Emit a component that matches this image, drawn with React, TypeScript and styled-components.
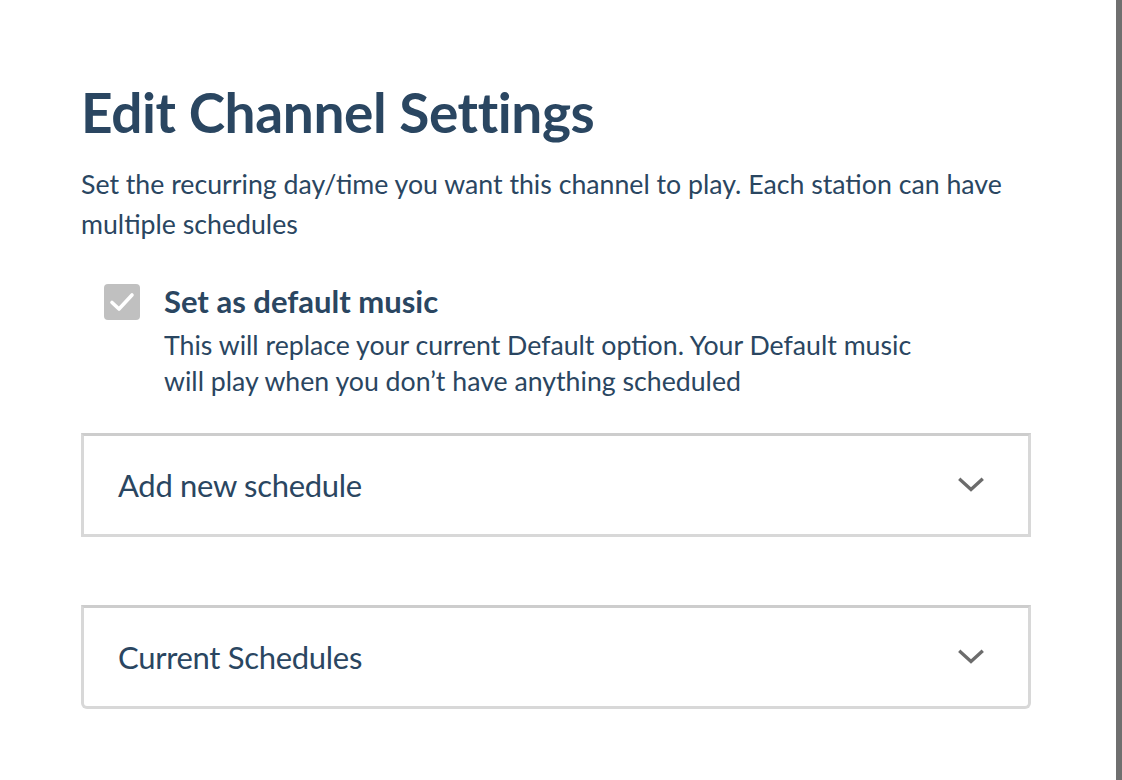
import styled, { createGlobalStyle } from "styled-components"

const GlobalStyle = createGlobalStyle`
  html, body {
    margin: 0;
    padding: 0;
    background: #ffffff;
  }
  body {
    font-family: Lato, "Open Sans", "Liberation Sans", sans-serif;
    color: #2a4661;
  }
`

// Layout
const Page = styled.div`
  display: flex;
  height: 780px;
  overflow: hidden;
`
const Modal = styled.section`
  flex: 1;
  background: #ffffff;
  padding: 76px 0 0 81px;
  box-sizing: border-box;
`
const Backdrop = styled.div`
  width: 6px;
  background: #6f6f6f;
`
const Content = styled.div`
  width: 950px;
  display: flex;
  flex-direction: column;
`

// Header
const Title = styled.h1`
  margin: 0;
  font-size: 55px;
  line-height: 72px;
  font-weight: 700;
  letter-spacing: -0.4px;
  color: #2a4661;
`
const Lead = styled.p`
  margin: 16px 0 0;
  font-size: 26.7px;
  line-height: 40px;
  font-weight: 400;
  width: 940px;
`

// Default option
const Option = styled.label`
  display: flex;
  gap: 24px;
  margin: 37px 0 0 23px;
  cursor: pointer;
`
const Box = styled.span<{ $checked: boolean }>`
  flex: none;
  width: 36px;
  height: 36px;
  margin-top: 3px;
  border-radius: 4px;
  background: ${props => props.$checked ? '#c0c0c0' : '#ffffff'};
  display: flex;
  align-items: center;
  justify-content: center;
`
const OptionText = styled.div`
  display: flex;
  flex-direction: column;
`
const OptionTitle = styled.span`
  font-size: 31px;
  line-height: 40px;
  font-weight: 700;
`
const OptionHint = styled.span`
  margin-top: 6px;
  font-size: 26.7px;
  line-height: 36px;
  width: 770px;
`

// Accordions
const Panel = styled.div<{ $rounded: boolean }>`
  border: 3px solid #d8d8d8;
  border-top-color: #cdcdcd;
  border-radius: ${props => props.$rounded ? '0 0 6px 6px' : '0'};
  height: 104px;
  box-sizing: border-box;
  display: flex;
  align-items: center;
  justify-content: space-between;
  padding: 0 44px 0 34px;
  cursor: pointer;
`
const PanelLabel = styled.span`
  font-size: 31px;
  line-height: 36px;
  font-weight: 400;
  letter-spacing: -0.3px;
`
const Chevron = () => (
  <svg width="26" height="16" viewBox="0 0 26 16" fill="none">
    <path d="M2.5 3 L13 12.5 L23.5 3" stroke="#6c6c6c" strokeWidth="3.4" strokeLinecap="square" />
  </svg>
)
const Check = () => (
  <svg width="26" height="22" viewBox="0 0 26 22" fill="none">
    <path d="M3 11.5 L10 18 L23 4" stroke="#ffffff" strokeWidth="3.6" strokeLinecap="round" strokeLinejoin="round" />
  </svg>
)

const Accordion: React.FC<{ label: string, rounded?: boolean }> = ({ label, rounded = false }) => (
  <Panel $rounded={rounded}>
    <PanelLabel>{label}</PanelLabel>
    <Chevron />
  </Panel>
)

const Stack = styled.div`
  display: flex;
  flex-direction: column;
  gap: 68px;
  margin-top: 34px;
`

export default function App() {
  return (
    <Page>
      <GlobalStyle />
      <Modal>
        <Content>
          <Title>Edit Channel Settings</Title>
          <Lead>Set the recurring day/time you want this channel to play. Each station can have multiple schedules</Lead>
          <Option>
            <Box $checked>
              <Check />
            </Box>
            <OptionText>
              <OptionTitle>Set as default music</OptionTitle>
              <OptionHint>This will replace your current Default option. Your Default music will play when you don’t have anything scheduled</OptionHint>
            </OptionText>
          </Option>
          <Stack>
            <Accordion label="Add new schedule" />
            <Accordion label="Current Schedules" rounded />
          </Stack>
        </Content>
      </Modal>
      <Backdrop />
    </Page>
  )
}
